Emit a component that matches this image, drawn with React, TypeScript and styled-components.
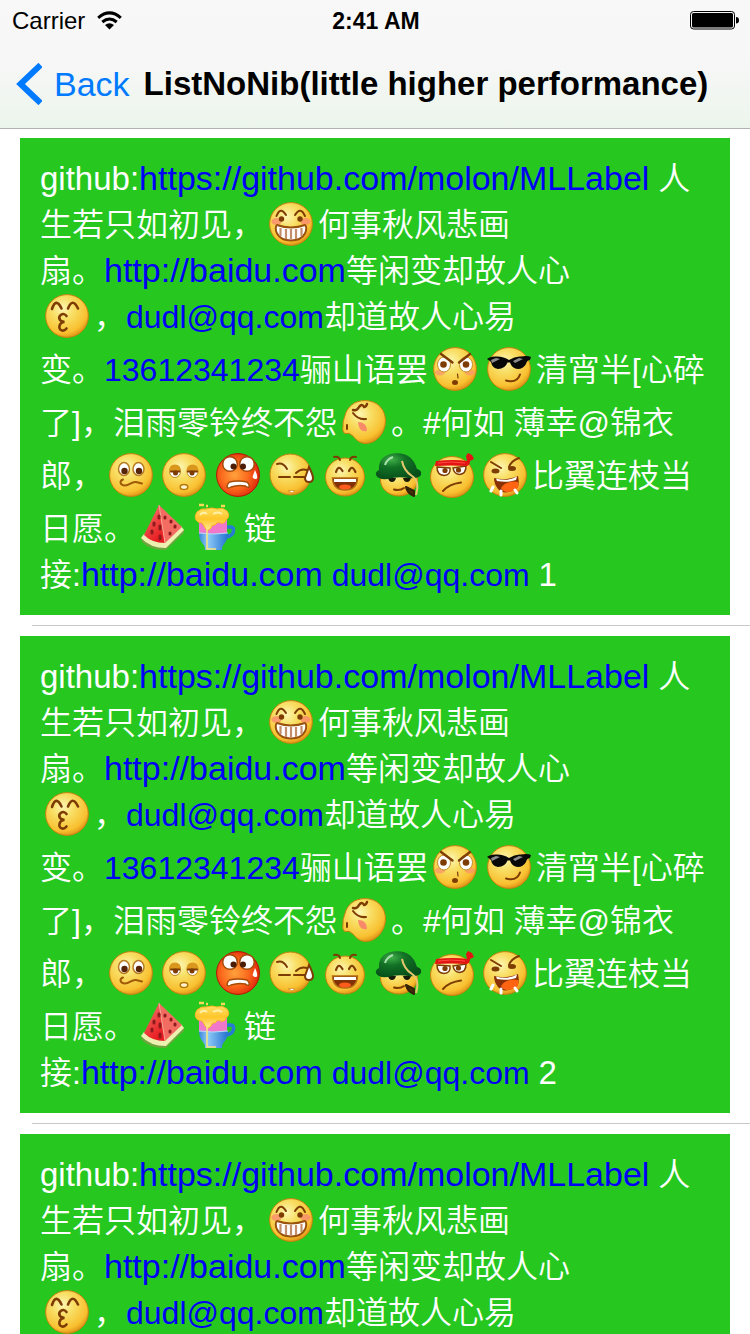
import React from "react";
import styled, { createGlobalStyle } from "styled-components";

const GlobalStyle = createGlobalStyle`
  * { box-sizing: border-box; }
  body {
    margin: 0;
    background: #fff;
    color: #000;
    font-family: "Liberation Sans", "Noto Sans CJK SC", sans-serif;
  }
`;

const Screen = styled.div`
  height: 100vh;
  display: flex;
  flex-direction: column;
  overflow: hidden;
`;

const Header = styled.header`
  position: relative;
  flex: none;
  background: linear-gradient(#f8f8f8 0, #f7f7f7 60px, #ecf5ec 128px);
  box-shadow: 0 1px 0 #b2b2b2;
`;

const StatusBar = styled.div`
  height: 42px;
  padding: 0 10px 0 12px;
  display: grid;
  grid-template-columns: 1fr auto 1fr;
  align-items: center;
  font-size: 24px;
  line-height: 42px;
`;

const Carrier = styled.span`
  display: flex;
  align-items: center;
  gap: 12px;
`;

const Time = styled.span`
  font-size: 23px;
  font-weight: 700;
`;

const Battery = styled.svg`
  justify-self: end;
`;

const NavBar = styled.nav`
  height: 86px;
  padding: 0 16px 2px;
  display: flex;
  align-items: center;
  gap: 14px;
`;

const BackButton = styled.button`
  display: flex;
  align-items: center;
  gap: 12px;
  padding: 0;
  border: 0;
  background: none;
  color: #007aff;
  font: 34px/40px "Liberation Sans", sans-serif;
`;

const Title = styled.h1`
  margin: 0;
  font-size: 33px;
  line-height: 40px;
  font-weight: 700;
  white-space: nowrap;
`;

const List = styled.ul`
  flex: 1;
  min-height: 0;
  margin: 0;
  padding: 0;
  list-style: none;
  overflow-y: auto;
  scrollbar-width: none;
`;

const Cell = styled.li`
  &::after {
    content: "";
    display: block;
    height: 1px;
    margin-left: 32px;
    background: #c8c7cc;
  }
`;

const Card = styled.article`
  margin: 10px 20px;
  padding: 18px 20px 17px;
  background: #26c820;
  color: #fff;
  font-size: 32px;
  font-weight: 350;
`;

const Line = styled.div<{ $tall?: boolean }>`
  padding-top: ${(p) => (p.$tall ? 7 : 0)}px;
  line-height: 46px;
  white-space: pre;
`;

const Latin = styled.span`
  font-size: 33px;
  line-height: 1;
`;

const Link = styled.a<{ $url?: boolean }>`
  color: #0000f5;
  font-size: ${(p) => (p.$url ? 34 : 32)}px;
  line-height: 1;
  text-decoration: none;
`;

const Face = styled.svg`
  width: 44px;
  height: 44px;
  margin: 0 5px;
  vertical-align: -10px;
  overflow: visible;
`;

const FaceRow = styled.span`
  display: inline-flex;
  justify-content: space-around;
  width: 428px;
  vertical-align: -10px;
  ${Face} {
    margin: 0;
  }
`;

const brown = "#7d3c04";
const stroke = { fill: "none", stroke: brown, strokeWidth: 2, strokeLinecap: "round" as const };

const Gradients = () => (
  <svg width="0" height="0" style={{ position: "absolute" }} aria-hidden="true">
    <defs>
      <radialGradient id="skin" cx="0.4" cy="0.32" r="0.72">
        <stop offset="0" stopColor="#fdf6b4" />
        <stop offset="0.35" stopColor="#f8df66" />
        <stop offset="0.8" stopColor="#f9c030" />
        <stop offset="1" stopColor="#db8c14" />
      </radialGradient>
      <radialGradient id="hot" cx="0.42" cy="0.5" r="0.65">
        <stop offset="0" stopColor="#ffa23c" />
        <stop offset="0.5" stopColor="#fb681c" />
        <stop offset="1" stopColor="#d81808" />
      </radialGradient>
      <radialGradient id="helmet" cx="0.35" cy="0.25" r="0.75">
        <stop offset="0" stopColor="#3fae48" />
        <stop offset="0.4" stopColor="#127125" />
        <stop offset="1" stopColor="#07501a" />
      </radialGradient>
      <linearGradient id="melon" x1="0" y1="0" x2="0.5" y2="1">
        <stop offset="0" stopColor="#f98a80" />
        <stop offset="0.5" stopColor="#ef4a48" />
        <stop offset="1" stopColor="#e81c20" />
      </linearGradient>
      <linearGradient id="cup" x1="0" y1="0" x2="1" y2="0">
        <stop offset="0" stopColor="#3b86da" />
        <stop offset="0.3" stopColor="#8fcaf8" />
        <stop offset="1" stopColor="#2273cf" />
      </linearGradient>
      <linearGradient id="foam" x1="0" y1="0" x2="0" y2="1">
        <stop offset="0" stopColor="#ffe066" />
        <stop offset="0.5" stopColor="#ffc52a" />
        <stop offset="1" stopColor="#ffe98e" />
      </linearGradient>
    </defs>
  </svg>
);

const Ball = ({ fill = "url(#skin)", rim = "#c5820f" }: { fill?: string; rim?: string }) => (
  <circle cx="22" cy="22" r="21.4" fill={fill} stroke={rim} strokeWidth="1" />
);

const Grin = () => (
  <Face viewBox="0 0 44 44" role="img" aria-label="grin">
    <Ball />
    <ellipse cx="7.5" cy="19.5" rx="5" ry="3.6" fill="#f98f6c" opacity="0.85" />
    <ellipse cx="36.5" cy="19.5" rx="5" ry="3.6" fill="#f98f6c" opacity="0.85" />
    <path d="M7.500 14Q11.500 4 17 13M26 13Q31.500 4 36 14" {...stroke} />
    <circle cx="12.500" cy="17" r="2.700" fill={brown} />
    <circle cx="31" cy="17" r="2.700" fill={brown} />
    <path d="M8 23Q22 28 36 23C39 25 37.500 38.500 22 38.500C6.500 38.500 5 25 8 23Z" fill="#fff" stroke="#99530d" strokeWidth="2" />
    <path d="M11.500 26v8M17 27v10M22 27v10.500M27 27v10M32.500 26v8" stroke="#c38e69" strokeWidth="2.200" />
  </Face>
);

const Kiss = () => (
  <Face viewBox="0 0 44 44" role="img" aria-label="kiss">
    <Ball />
    <path d="M7 15Q11 3 16.500 14.500M23 14.500Q27.500 3 33 14.500" {...stroke} strokeWidth="2.600" />
    <path d="M21.500 22C18 17.500 12.500 22 15 26Q16 27.500 19.500 28C14 28 12.500 35.500 17 36.500Q19.500 37 21.500 34.500" {...stroke} strokeWidth="2.600" />
  </Face>
);

const Angry = () => (
  <Face viewBox="0 0 44 44" role="img" aria-label="angry">
    <Ball />
    <ellipse cx="7" cy="25.500" rx="5" ry="3" fill="#fa9a68" opacity="0.8" />
    <ellipse cx="37" cy="25.500" rx="5" ry="3" fill="#fa9a68" opacity="0.8" />
    <ellipse cx="11" cy="17.500" rx="6.500" ry="7.500" fill="#fff" stroke="#c48a24" />
    <ellipse cx="33" cy="17.500" rx="6.500" ry="7.500" fill="#fff" stroke="#c48a24" />
    <path d="M8 7L19.500 15.500M37 7L26 15.500" {...stroke} strokeWidth="2.400" />
    <circle cx="10.500" cy="17.500" r="3.300" fill={brown} />
    <circle cx="33" cy="17.500" r="3.300" fill={brown} />
    <path d="M24.500 27L25 31" {...stroke} strokeWidth="1.200" />
    <ellipse cx="22" cy="35.500" rx="3" ry="2.500" fill={brown} />
  </Face>
);

const Cool = () => (
  <Face viewBox="0 0 44 44" role="img" aria-label="cool">
    <Ball />
    <path d="M0 12Q3 9 10 9.500Q17 9.500 22 13Q28 9 34 9.500Q41 8.500 44 10L43 13Q40 13 39 17Q36 22 31 22Q25 22 23 15.500H20.500Q18 22 11 22Q5 21 4 15Q2 13 0 12Z" fill="#080808" />
    <path d="M4 13l5-2 4 1-8 4zM26 14l6-3 4 1-8 4z" fill="#8d8d8d" />
    <path d="M19 33.500Q30 36.500 33 27.500" {...stroke} />
  </Face>
);

const Turned = () => (
  <Face viewBox="0 0 44 44" role="img" aria-label="pout">
    <path d="M23 .6C36 .6 43.500 10 43.500 21S35 43.500 24 43.500C18 43.500 14 40 11 36Q7 32 3 33.500Q0 32 1 26Q.500 22 2.500 17C5 6 13 .6 23 .6Z" fill="url(#skin)" stroke="#c5820f" />
    <path d="M11 10Q15 11 17 7Q20 3 22 7Q24 7 25 4" {...stroke} strokeWidth="2.400" />
    <path d="M11 13Q16 20 24 19M5 25v4" {...stroke} />
    <path d="M16 22Q25 22 25 31Q17 33 16 22Z" fill="#f88a69" />
  </Face>
);

const Confused = () => (
  <Face viewBox="0 0 44 44" role="img" aria-label="confused">
    <Ball />
    <ellipse cx="15" cy="16" rx="5.500" ry="6.500" fill="#fff" stroke="#b77c22" strokeWidth="1.500" />
    <ellipse cx="29.500" cy="16" rx="5.500" ry="6.500" fill="#fff" stroke="#b77c22" strokeWidth="1.500" />
    <circle cx="15.500" cy="18" r="3.200" fill="#572408" />
    <circle cx="30" cy="18" r="3.200" fill="#572408" />
    <path d="M14 26.500C10 28 11 32.500 16 32.500S22 28.500 27 29T33 30.500" {...stroke} stroke="#a05a08" />
  </Face>
);

const Sleepy = () => (
  <Face viewBox="0 0 44 44" role="img" aria-label="sleepy">
    <Ball />
    <ellipse cx="13" cy="18.500" rx="5.500" ry="6" fill="#fff" stroke="#bd8417" />
    <ellipse cx="30.500" cy="18.500" rx="5.500" ry="6" fill="#fff" stroke="#bd8417" />
    <path d="M7 18.500Q7 11.500 13 11.500T19 18.500ZM24.500 18.500Q24.500 11.500 30.500 11.500T36.500 18.500Z" fill="#d9981d" />
    <path d="M9 18.500H17.500M26 18.500H35" {...stroke} />
    <circle cx="13.500" cy="20" r="2.500" fill={brown} />
    <circle cx="30" cy="20" r="2.500" fill={brown} />
    <ellipse cx="22" cy="34" rx="3.800" ry="2.500" fill="#fff2ce" stroke="#b57b0b" strokeWidth="1.500" />
  </Face>
);

const Panic = () => (
  <Face viewBox="0 0 44 44" role="img" aria-label="panic">
    <Ball fill="url(#hot)" rim="#b51405" />
    <circle cx="14" cy="11" r="7.300" fill="#fff" stroke="#a64b08" strokeWidth="1.500" />
    <circle cx="31" cy="11" r="7.300" fill="#fff" stroke="#a64b08" strokeWidth="1.500" />
    <circle cx="17.500" cy="13.500" r="3" fill="#4b1d07" />
    <circle cx="27" cy="13.500" r="3" fill="#4b1d07" />
    <path d="M13.500 29Q22 27 31 29Q34 32 33 34Q32 35 29.500 33Q22 31.500 15 34Q12 36 11 34Q11 31 13.500 29Z" fill="#fff" stroke="#a64b08" strokeWidth="1.500" />
    <path d="M39 17Q42 23 41 25.500Q38 27 36.500 24Z" fill="#fff" />
  </Face>
);

const Sweat = () => (
  <Face viewBox="0 0 44 44" role="img" aria-label="sweat">
    <circle cx="21.500" cy="21.500" r="20.500" fill="url(#skin)" stroke="#c5820f" />
    <path d="M8 11Q14 9 18 16M10 24H21M25 24H38M27 20Q32 15 38 17" {...stroke} />
    <path d="M40 14Q37 22 36 25Q36 29 40 29T44 25Q44 22 40 14Z" fill="#fff" stroke={brown} strokeWidth="2" />
    <path d="M19 37.500h7l-3 2.500z" fill="#fff" stroke="#d29428" strokeWidth=".8" />
  </Face>
);

const Laugh = () => (
  <Face viewBox="0 0 44 44" role="img" aria-label="laugh">
    <ellipse cx="22" cy="24" rx="19.500" ry="19" fill="url(#skin)" stroke="#c5820f" />
    <path d="M11 4Q16 3 17 7M27 7Q28 3 33 4" {...stroke} />
    <path d="M13 19Q15.500 11 19.500 18M26 18Q29 11 32.500 19" {...stroke} strokeWidth="2.200" />
    <path d="M9.500 25H34.500Q34 37 22 37T9.500 25Z" fill="#823006" stroke="#b36c15" strokeWidth="1.500" />
    <path d="M11 26H33V29H11Z" fill="#fff" />
    <ellipse cx="22" cy="34" rx="6" ry="2.500" fill="#ff5b1d" />
  </Face>
);

const Soldier = () => (
  <Face viewBox="0 0 44 44" role="img" aria-label="soldier">
    <ellipse cx="23" cy="27" rx="18.500" ry="16" fill="url(#skin)" stroke="#c5820f" />
    <path d="M12 25h8q-1 4-4 4t-4-4ZM27 25h8q-1 4-4 4t-4-4Z" fill="#171b08" />
    <path d="M18 36.500Q24 38 28 35" {...stroke} />
    <path d="M3 17Q2 3 17 .500Q36 -2 41 16Q46 17 45 22Q42 26 32 25Q22 23 12 26Q2 27 0 22Q-1 19 3 17Z" fill="url(#helmet)" />
    <path d="M9 12Q11 6 17 4" fill="none" stroke="#a8e0ad" strokeWidth="2" />
    <path d="M26 8Q28 18 36 23T40 42" fill="none" stroke="#e7c66e" strokeWidth="2" />
    <path d="M30 34L38 38L38 43Q31 40 30 34Z" fill="#43300c" stroke="#332307" strokeWidth="2" strokeLinejoin="round" />
  </Face>
);

const Fighter = () => (
  <Face viewBox="0 0 44 44" role="img" aria-label="fighter">
    <ellipse cx="22" cy="24" rx="21.500" ry="20.500" fill="url(#skin)" stroke="#c5820f" />
    <path d="M7 14L20 15Q21 22 14 22.500Q7 22 7 14ZM23 15L36 13Q36 21 29.500 21.500Q24 21 23 15Z" fill="#fff" stroke={brown} strokeWidth="1.500" />
    <circle cx="15" cy="17.500" r="2.600" fill={brown} />
    <circle cx="28.500" cy="17" r="2.600" fill={brown} />
    <path d="M13 38Q19 31 31 29.500" {...stroke} />
    <path d="M6 8Q24 6 37 8L36 3L38 0L42 2L44 6L40 8Q40 12 37 13Q21 12 5 13Z" fill="#e21414" />
    <path d="M8 10Q21 8 35 10" fill="none" stroke="#ff4a40" />
  </Face>
);

const Rage = () => (
  <Face viewBox="0 0 44 44" role="img" aria-label="rage">
    <Ball />
    <path d="M8 9L18 15M36 5Q28 8 26 14" {...stroke} />
    <ellipse cx="12.500" cy="18" rx="4" ry="2.500" fill={brown} />
    <ellipse cx="29" cy="15.500" rx="4" ry="2.500" fill={brown} />
    <path d="M11 25Q23 28 35 23Q38 37 29 38Q20 42 15 36Q11 31 11 25Z" fill="#8a3005" />
    <path d="M18 35Q23 27 35 29Q37 37 29 38Q21 41 18 35Z" fill="#ff6412" />
    <path d="M13 25.500Q24 29 34 23.500L33 27Q24 30 14 28Z" fill="#fff" />
    <path d="M10 34L8 38M18 38V42M32 37L34 40" stroke="#fff" strokeWidth="3" strokeLinecap="round" />
  </Face>
);

const Melon = () => (
  <Face viewBox="0 0 44 44" role="img" aria-label="watermelon">
    <path d="M0 32L1 36Q10 45 25 44L43 27V23Z" fill="#6ea53f" />
    <path d="M3 28L0 32Q9 42 25 42L43 24L40 20Z" fill="#ecf0b0" />
    <path d="M18 -1L3 29Q11 37 24 37Z" fill="url(#melon)" />
    <path d="M18 -1L24 37L41 21Z" fill="#f36c62" />
    <path d="M18 -1L24 37" stroke="#f9a598" />
    <path d="M18 10v2M13 17v2M19 20v3M11 25v2M19 30v3M24 11v1M30 15v1M34 20v1M29 27v1" stroke="#8d1a1d" strokeWidth="3" strokeLinecap="round" />
  </Face>
);

const Drink = () => (
  <Face viewBox="0 0 44 44" role="img" aria-label="drink">
    <path d="M32 21H36Q39 21 38.500 25Q38 30 31 31" fill="none" stroke="#287bd5" strokeWidth="3.500" />
    <path d="M4 12H32V28H4Z" fill="#ef78ca" />
    <path d="M4 27Q18 29 33 27Q33 34 29 38Q27 40 27 44H10Q10 40 8 38Q4 34 4 27Z" fill="url(#cup)" />
    <path d="M4 27Q18 29 33 27" fill="none" stroke="#b6dcfb" />
    <path d="M3 16Q-2 12 2 6Q6 2 11 3Q17 1 22 3Q28 1 32 5Q36 10 31 14Q30 18 26 17Q22 15 20 19Q17 18 16 22Q12 27 9 20Q8 16 3 16Z" fill="url(#foam)" stroke="#f9b421" />
    <path d="M5 9Q8 5 12 8M18 8Q23 5 27 8" fill="none" stroke="#fff1aa" strokeWidth="2" />
    <path d="M12 21V43H21" fill="none" stroke="#f9e67b" strokeWidth="1.500" />
    <path d="M4 -1h5M11 0h2M26 0h4" stroke="#f8d858" strokeWidth="2.500" />
  </Face>
);

const Message = ({ index }: { index: number }) => (
  <Card>
    <Line>
      <Latin>github:</Latin>
      <Link $url href="https://github.com/molon/MLLabel">https://github.com/molon/MLLabel</Link>
      {" 人"}
    </Line>
    <Line>生若只如初见，<Grin />何事秋风悲画</Line>
    <Line>扇。<Link $url href="http://baidu.com">http://baidu.com</Link>等闲变却故人心</Line>
    <Line><Kiss />，<Link href="mailto:dudl@qq.com">dudl@qq.com</Link>却道故人心易</Line>
    <Line $tall>变。<Link href="tel:13612341234">13612341234</Link>骊山语罢<Angry /><Cool />清宵半[心碎</Line>
    <Line $tall>了]，泪雨零铃终不怨<Turned />。#何如 薄幸@锦衣</Line>
    <Line $tall>
      郎，
      <FaceRow>
        <Confused /><Sleepy /><Panic /><Sweat /><Laugh /><Soldier /><Fighter /><Rage />
      </FaceRow>
      比翼连枝当
    </Line>
    <Line $tall>日愿。<Melon /><Drink />链</Line>
    <Line>
      接:<Link $url href="http://baidu.com">http://baidu.com</Link>{" "}
      <Link href="mailto:dudl@qq.com">dudl@qq.com</Link>{" "}
      <Latin>{index}</Latin>
    </Line>
  </Card>
);

export default function App() {
  return (
    <Screen>
      <GlobalStyle />
      <Gradients />
      <Header>
        <StatusBar>
          <Carrier>
            Carrier
            <svg width="25" height="20" viewBox="0 0 25 20" aria-label="Wi-Fi">
              <path d="M1.200 6.800Q12.500 -3 23.800 6.800M5.300 11Q12.500 5 19.700 11" fill="none" stroke="#000" strokeWidth="3" />
              <path d="M8 14Q12.500 10.500 17 14L12.500 18.500Z" />
            </svg>
          </Carrier>
          <Time>2:41 AM</Time>
          <Battery width="50" height="20" viewBox="0 0 50 20" aria-label="Battery full">
            <rect x="0.500" y="0.500" width="44" height="17.500" rx="3" fill="none" stroke="#000" />
            <rect x="2" y="2" width="41" height="14.500" rx="1.500" />
            <path d="M46 6Q49 6 49 9.200T46 12.500Z" />
          </Battery>
        </StatusBar>
        <NavBar>
          <BackButton type="button">
            <svg width="26" height="42" viewBox="0 0 26 42" aria-hidden="true">
              <path d="M24.500 2L4.500 21L24.500 40" fill="none" stroke="#007aff" strokeWidth="6" />
            </svg>
            Back
          </BackButton>
          <Title>ListNoNib(little higher performance)</Title>
        </NavBar>
      </Header>
      <List>
        {[1, 2, 3].map((n) => (
          <Cell key={n}>
            <Message index={n} />
          </Cell>
        ))}
      </List>
    </Screen>
  );
}
